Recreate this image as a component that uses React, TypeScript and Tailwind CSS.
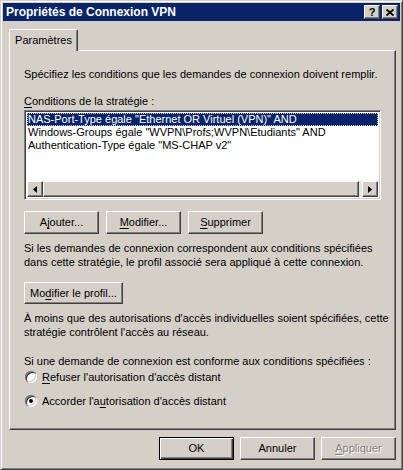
import React from "react";

const font = "font-['Liberation_Sans',Arial,sans-serif]";

const raised =
  "bg-[#d4d0c8] border border-t-white border-l-white border-r-[#404040] border-b-[#404040] shadow-[inset_-1px_-1px_0_#808080]";

const sunken =
  "border border-t-[#808080] border-l-[#808080] border-r-white border-b-white shadow-[inset_1px_1px_0_#404040,inset_-1px_-1px_0_#d4d0c8]";

const U = ({ children }: { children: React.ReactNode }) => (
  <span className="underline underline-offset-[2px]">{children}</span>
);

const Button = ({
  children,
  className = "",
  isDefault = false,
  disabled = false,
}: {
  children: React.ReactNode;
  className?: string;
  isDefault?: boolean;
  disabled?: boolean;
}) => (
  <div
    className={`h-[23px] w-[75px] flex items-center justify-center text-[11px] ${
      isDefault
        ? "bg-[#d4d0c8] border border-black shadow-[inset_1px_1px_0_#fff,inset_-1px_-1px_0_#404040,inset_-2px_-2px_0_#808080]"
        : raised
    } ${disabled ? "text-[#808080] [text-shadow:1px_1px_0_#fff]" : "text-black"} ${className}`}
  >
    {children}
  </div>
);

const Radio = ({ checked, children }: { checked?: boolean; children: React.ReactNode }) => (
  <div className="flex items-center h-[14px]">
    <div className="w-[12px] h-[12px] rounded-full bg-white ml-[1px] flex items-center justify-center shadow-[inset_1px_1px_0_#808080,inset_2px_2px_0_#404040,inset_-1px_-1px_0_#fff,inset_-2px_-2px_0_#d4d0c8]">
      {checked && <div className="w-[4px] h-[4px] rounded-full bg-black" />}
    </div>
    <span className="ml-[5px]">{children}</span>
  </div>
);

const Arrow = ({ dir }: { dir: "left" | "right" }) => (
  <div className={`w-[16px] h-[16px] flex items-center justify-center ${raised}`}>
    <svg width="4" height="7" viewBox="0 0 4 7">
      {dir === "left" ? (
        <path d="M4 0 L0 3.5 L4 7 Z" fill="#000" />
      ) : (
        <path d="M0 0 L4 3.5 L0 7 Z" fill="#000" />
      )}
    </svg>
  </div>
);

export default function App() {
  return (
    <div
      className={`${font} w-[403px] h-[470px] bg-[#d4d0c8] border border-t-[#d4d0c8] border-l-[#d4d0c8] border-r-[#404040] border-b-[#404040] shadow-[inset_1px_1px_0_#fff,inset_-1px_-1px_0_#808080] p-[2px] flex flex-col text-[11px] text-black leading-[13px]`}
    >
      {/* title bar */}
      <div className="h-[18px] bg-[#0a246a] flex items-center justify-between pl-[3px] pr-[2px]">
        <span className="text-white font-bold text-[12px]">Propriétés de Connexion VPN</span>
        <div className="flex gap-[2px]">
          <div className={`w-[16px] h-[14px] flex items-center justify-center ${raised}`}>
            <span className="font-bold text-[11px] leading-none">?</span>
          </div>
          <div className={`w-[16px] h-[14px] flex items-center justify-center ${raised}`}>
            <svg width="8" height="7" viewBox="0 0 8 7">
              <path d="M0.5 0.5 L7.5 6.5 M7.5 0.5 L0.5 6.5" stroke="#000" strokeWidth="1.8" />
            </svg>
          </div>
        </div>
      </div>

      {/* tab header */}
      <div className="mt-[8px] ml-[6px] flex">
        <div className="relative z-10 -mb-[1px] h-[22px] w-[69px] bg-[#d4d0c8] border-t border-l border-r border-t-white border-l-white border-r-[#404040] shadow-[inset_-1px_0_0_#808080] rounded-tl-[2px] rounded-tr-[2px] flex items-start justify-center pt-[4px]">
          Paramètres
        </div>
      </div>

      {/* tab panel */}
      <div className="ml-[6px] w-[387px] h-[380px] border border-t-white border-l-white border-r-[#404040] border-b-[#404040] shadow-[inset_-1px_-1px_0_#808080] px-[14px] pt-[17px] flex flex-col whitespace-nowrap">
        <div>Spécifiez les conditions que les demandes de connexion doivent remplir.</div>
        <div className="mt-[14px]">
          <U>C</U>onditions de la stratégie :
        </div>

        <div className={`mt-[2px] h-[90px] bg-white flex flex-col p-[2px] ${sunken}`}>
          <div className="flex-1">
            <div className="h-[13px] bg-[#0a246a] text-white pl-[1px] outline outline-1 outline-dotted outline-[#d4d0c8] -outline-offset-1">
              NAS-Port-Type égale "Ethernet OR Virtuel (VPN)" AND
            </div>
            <div className="h-[13px] pl-[1px]">Windows-Groups égale "WVPN\Profs;WVPN\Etudiants" AND</div>
            <div className="h-[13px] pl-[1px]">Authentication-Type égale "MS-CHAP v2"</div>
          </div>
          <div className="h-[16px] flex bg-[#e8e6e2]">
            <Arrow dir="left" />
            <div className={`flex-1 ${raised}`} />
            <div className="w-[3px]" />
            <Arrow dir="right" />
          </div>
        </div>

        <div className="mt-[11px] flex gap-[7px]">
          <Button>
            A<U>j</U>outer...
          </Button>
          <Button>
            <U>M</U>odifier...
          </Button>
          <Button>
            <U>S</U>upprimer
          </Button>
        </div>

        <div className="mt-[7px] leading-[14px]">
          Si les demandes de connexion correspondent aux conditions spécifiées
          <br />
          dans cette stratégie, le profil associé sera appliqué à cette connexion.
        </div>

        <Button className="mt-[13px] !w-[99px] !h-[22px]">
          Mo<U>d</U>ifier le profil...
        </Button>

        <div className="mt-[7px] leading-[14px]">
          À moins que des autorisations d'accès individuelles soient spécifiées, cette
          <br />
          stratégie contrôlent l'accès au réseau.
        </div>

        <div className="mt-[15px] leading-[14px]">
          Si une demande de connexion est conforme aux conditions spécifiées :
        </div>
        <div className="mt-[2px] flex flex-col gap-[10px]">
          <Radio>
            <U>R</U>efuser l'autorisation d'accès distant
          </Radio>
          <Radio checked>
            Accorder l'a<U>u</U>torisation d'accès distant
          </Radio>
        </div>
      </div>

      {/* dialog buttons */}
      <div className="mt-[7px] flex justify-end gap-[6px] pr-[4px]">
        <Button isDefault>OK</Button>
        <Button>Annuler</Button>
        <Button disabled>
          <U>A</U>ppliquer
        </Button>
      </div>
    </div>
  );
}
